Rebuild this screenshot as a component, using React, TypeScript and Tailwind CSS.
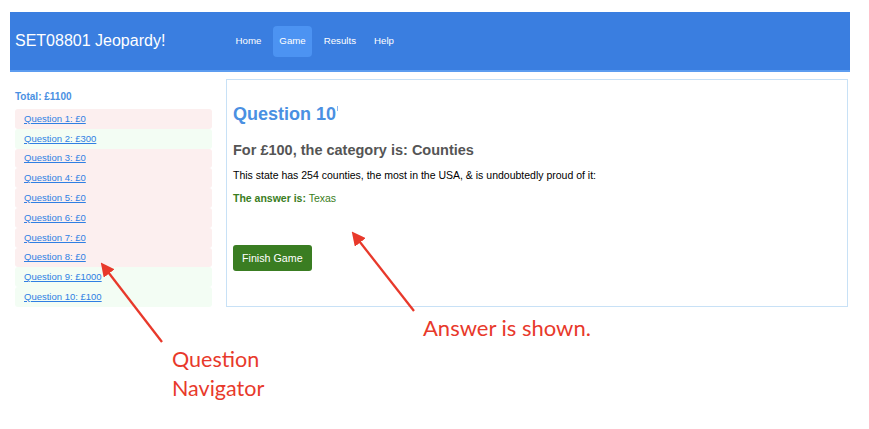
const questions = [
  { label: "Question 1: £0", right: false },
  { label: "Question 2: £300", right: true },
  { label: "Question 3: £0", right: false },
  { label: "Question 4: £0", right: false },
  { label: "Question 5: £0", right: false },
  { label: "Question 6: £0", right: false },
  { label: "Question 7: £0", right: false },
  { label: "Question 8: £0", right: false },
  { label: "Question 9: £1000", right: true },
  { label: "Question 10: £100", right: true },
];

const navItems = ["Home", "Game", "Results", "Help"];

const Navbar = () => (
  <nav className="flex items-center h-[60px] w-[840px] bg-[#3a7ee0] border-b-2 border-[#5c9cf0]">
    <span className="pl-[5px] w-[219px] text-[16px] text-white">SET08801 Jeopardy!</span>
    <ul className="flex items-center gap-[5px]">
      {navItems.map((item) => (
        <li
          key={item}
          className={
            item === "Game"
              ? "px-[6.5px] h-[31px] flex items-center rounded-[4px] bg-[#4c93f2] text-[9.7px] text-white"
              : "px-[6.5px] h-[31px] flex items-center text-[9.7px] text-white"
          }
        >
          {item}
        </li>
      ))}
    </ul>
  </nav>
);

const QuestionNav = () => (
  <aside className="w-[197px] ml-[5px]">
    <p className="mt-[18px] h-[19px] text-[10px] leading-[14px] font-bold text-[#4a90e2]">Total: £1100</p>
    <ul>
      {questions.map((q) => (
        <li
          key={q.label}
          className={
            q.right
              ? "h-[19.8px] flex items-center pl-[9px] rounded-[3px] bg-[#f3fdf4]"
              : "h-[19.8px] flex items-center pl-[9px] rounded-[3px] bg-[#fcefef]"
          }
        >
          <a href="#" className="text-[9.5px] text-[#2f7fe3] underline">
            {q.label}
          </a>
        </li>
      ))}
    </ul>
  </aside>
);

const QuestionPanel = () => (
  <section className="mt-[7px] ml-[14px] w-[622px] h-[228px] border border-[#c8e1f6] pl-[6px]">
    <h2 className="mt-[23px] text-[18px] leading-[22px] font-bold text-[#4a90e2]">
      Question 10
      <span className="inline-block w-px h-[5px] ml-[1px] align-top mt-[3px] bg-[#8fb8ee]" />
    </h2>
    <h3 className="mt-[16px] text-[14.5px] leading-[18px] font-bold text-[#555555]">
      For £100, the category is: Counties
    </h3>
    <p className="mt-[9px] text-[10.5px] leading-[14px] text-black">
      This state has 254 counties, the most in the USA, &amp; is undoubtedly proud of it:
    </p>
    <p className="mt-[9px] text-[10.5px] leading-[14px] text-[#3a7d22]">
      <b>The answer is:</b> Texas
    </p>
    <button className="mt-[40px] h-[26px] px-[9px] rounded-[3px] bg-[#3a7d22] text-[10.7px] text-white">
      Finish Game
    </button>
  </section>
);

const Annotations = () => (
  <>
    <svg className="absolute left-0 top-0 pointer-events-none" width="869" height="429">
      <defs>
        <marker id="head" markerWidth="6" markerHeight="6" refX="3" refY="3" orient="auto">
          <path d="M0,0 L6,3 L0,6 Z" fill="#e8392b" />
        </marker>
      </defs>
      <line x1="162" y1="342" x2="105" y2="268" stroke="#e8392b" strokeWidth="2.3" markerEnd="url(#head)" />
      <line x1="414" y1="311" x2="356" y2="237" stroke="#e8392b" strokeWidth="2.3" markerEnd="url(#head)" />
    </svg>
    <div className="absolute left-[172px] top-[345px] font-['Lato',sans-serif] text-[21.5px] leading-[29px] text-[#e8392b]">
      Question
      <br />
      Navigator
    </div>
    <div className="absolute left-[423px] top-[314px] font-['Lato',sans-serif] text-[22px] leading-[28px] text-[#e8392b]">
      Answer is shown.
    </div>
  </>
);

export default function App() {
  return (
    <div className="relative w-[869px] h-[429px] bg-white font-['Liberation_Sans',Arial,sans-serif]">
      <div className="pt-[12px] pl-[10px]">
        <Navbar />
        <div className="flex">
          <QuestionNav />
          <QuestionPanel />
        </div>
      </div>
      <Annotations />
    </div>
  );
}
